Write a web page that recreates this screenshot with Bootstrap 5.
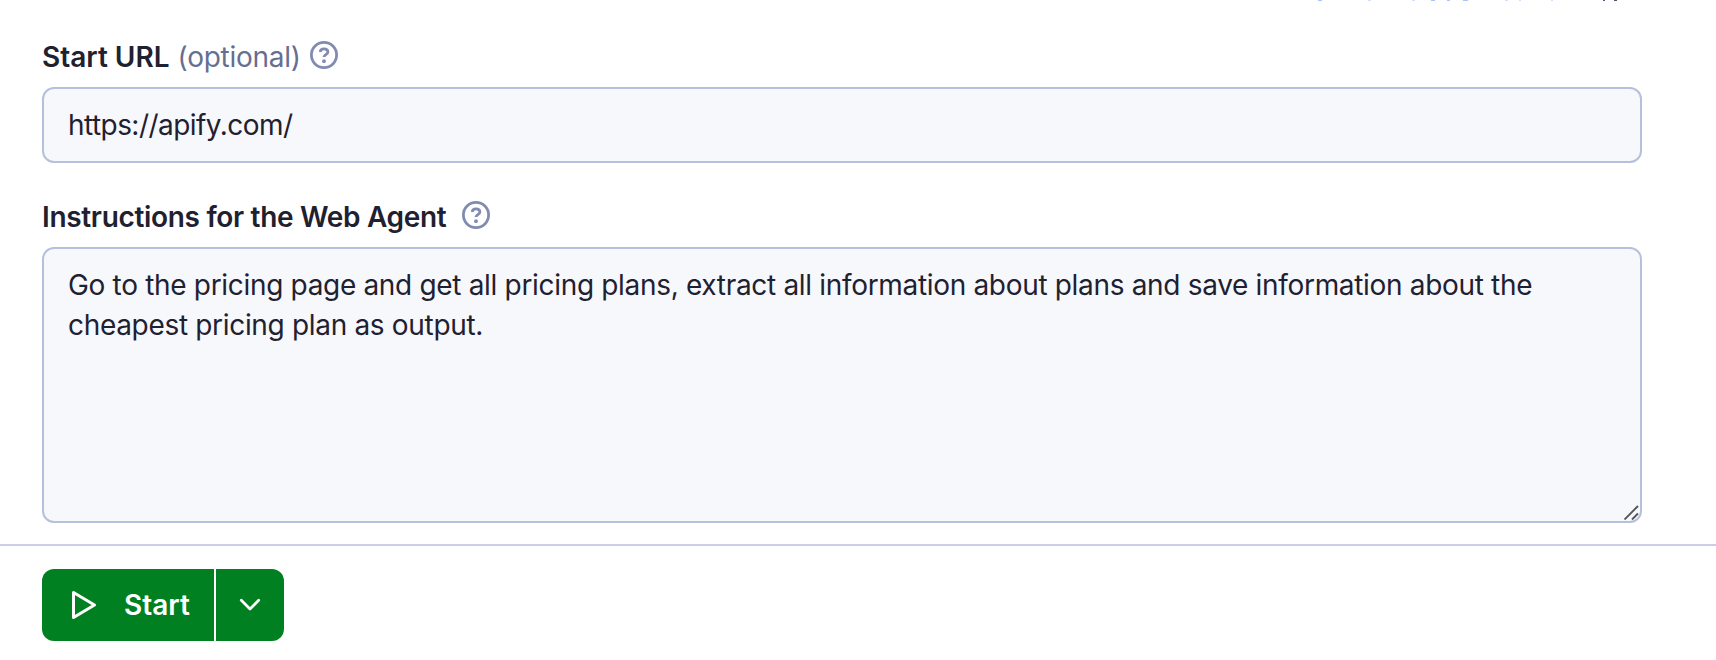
<!DOCTYPE html>
<html lang="en">
<head>
<meta charset="utf-8">
<meta name="viewport" content="width=device-width, initial-scale=1">
<title>Web Agent input</title>
<link href="https://cdn.jsdelivr.net/npm/bootstrap@5.3.0/dist/css/bootstrap.min.css" rel="stylesheet">
<style>
body{font-family:Inter,"Liberation Sans",sans-serif;font-size:28px;line-height:40px;color:#1f2130;background:#fff;height:660px;overflow:hidden}
.field-area{height:546px;padding:37px 74px 0 42px;border-bottom:2px solid #cbcee6}
.second{margin-top:34px}
.form-label{height:40px;margin-bottom:10px;line-height:40px;font-weight:600;white-space:nowrap}
.label-url{width:296px}
.label-ins{width:448px}
.t2{letter-spacing:-.32px}
.opt{font-weight:400;color:#666f91;margin-left:8px;letter-spacing:-.27px}
.help{color:#828bb0;margin-top:-4px;flex:none}
.form-control,.form-control:focus{font-size:28px;line-height:40px;color:#1f2130;background:#f7f8fc;border:2px solid #b6bfdc;border-radius:12px;padding:16px 24px;box-shadow:none;letter-spacing:-.32px}
.form-control.url-input{height:76px;letter-spacing:-.55px}
.instr{height:276px;resize:none;overflow:hidden}
.grip{right:2px;bottom:3px}
.run-bar{padding:23px 42px 0}
.btn-run{--bs-btn-bg:#008020;--bs-btn-color:#fff;--bs-btn-border-width:0;--bs-btn-hover-bg:#006f1c;--bs-btn-hover-color:#fff;height:72px;border-radius:12px;font-size:28px;line-height:40px;font-weight:600}
.btn-main{width:172px}
.play{margin-left:29px;margin-right:27px}
.btn-more{width:68px;margin-left:2px!important}
.clip-row{top:0;left:1310px}
</style>
</head>
<body class="m-0 position-relative">
<svg class="clip-row position-absolute" width="320" height="1" aria-hidden="true"><path d="M8 .5h4M121 .5h4M137 .5h3M153 .5h5" stroke="#a9c7fb"/><path d="M58 .5h3M102 .5h3M195 .5h3M209 .5h2M241 .5h2" stroke="#d0e0fc"/><path d="M293 .5h2M304 .5h3" stroke="#55536f"/></svg>
<main class="field-area">
  <div>
    <label class="form-label label-url d-flex align-items-center" for="url"><span>Start URL</span><span class="opt">(optional)</span>
      <svg class="help ms-auto" width="28" height="28" viewBox="0 0 28 28" fill="none" stroke="currentColor" stroke-width="2.8"><circle cx="14" cy="14" r="12.6"/><path d="M10.1 10.9C10.5 8.9 12 7.900 14 7.900c2.200 0 3.900 1.200 3.900 3.100 0 2.500-3.900 2.600-3.900 4.900"/><circle cx="14" cy="20.200" r="1.900" fill="currentColor" stroke="none"/></svg>
    </label>
    <input class="form-control url-input" id="url" type="text" value="https://apify.com/" spellcheck="false">
  </div>
  <div class="second">
    <label class="form-label label-ins d-flex align-items-center" for="ins"><span class="t2">Instructions for the Web Agent</span>
      <svg class="help ms-auto" width="28" height="28" viewBox="0 0 28 28" fill="none" stroke="currentColor" stroke-width="2.8"><circle cx="14" cy="14" r="12.6"/><path d="M10.1 10.9C10.5 8.9 12 7.900 14 7.900c2.200 0 3.900 1.200 3.900 3.100 0 2.500-3.900 2.600-3.900 4.900"/><circle cx="14" cy="20.200" r="1.900" fill="currentColor" stroke="none"/></svg>
    </label>
    <div class="position-relative">
      <textarea class="form-control instr d-block" id="ins" spellcheck="false">Go to the pricing page and get all pricing plans, extract all information about plans and save information about the cheapest pricing plan as output.</textarea>
      <svg class="grip position-absolute" width="16" height="15" viewBox="0 0 16 15" stroke="#555" stroke-width="1.9"><path d="M.5 14.500L14 1M8 14.500L14 8.500"/></svg>
    </div>
  </div>
</main>
<footer class="run-bar d-flex">
  <div class="btn-group">
    <button class="btn btn-run btn-main d-flex align-items-center p-0" type="button"><svg class="play" width="26" height="30" viewBox="0 0 26 30" fill="none" stroke="#fff" stroke-width="3" stroke-linejoin="round"><path d="M2.500 2.500V27.500L23.500 15Z"/></svg><span>Start</span></button>
    <button class="btn btn-run btn-more p-0 d-flex align-items-center justify-content-center" type="button" aria-label="More"><svg width="22" height="14" viewBox="0 0 22 14" fill="none" stroke="#fff" stroke-width="2.8" stroke-linecap="round" stroke-linejoin="round"><path d="M2.300 2.300L11 11L19.700 2.300"/></svg></button>
  </div>
</footer>
<script src="https://cdn.jsdelivr.net/npm/bootstrap@5.3.0/dist/js/bootstrap.bundle.min.js"></script>
</body>
</html>
